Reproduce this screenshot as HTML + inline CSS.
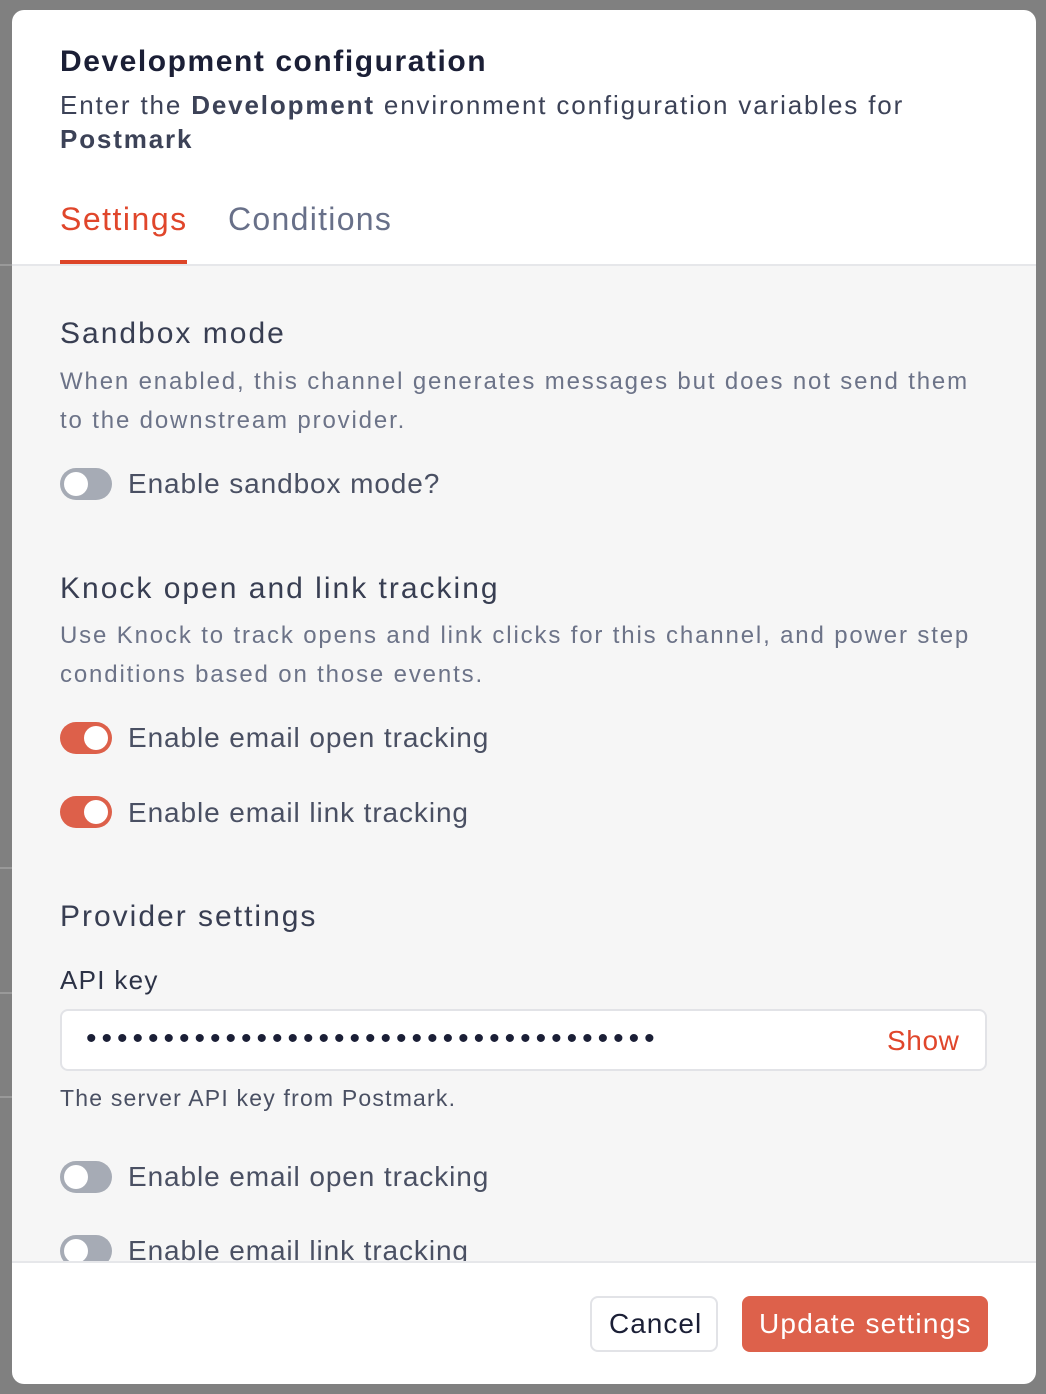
<!DOCTYPE html>
<html><head><meta charset="utf-8"><style>
*{margin:0;padding:0;box-sizing:border-box}
body{width:1046px;height:1394px;background:#808080;font-family:"Liberation Sans",sans-serif;position:relative;overflow:hidden}
.bgl{position:absolute;left:0;width:12px;height:2px;background:#999}
.modal{position:absolute;left:12px;top:10px;width:1024px;height:1374px;background:#fff;border-radius:12px;overflow:hidden}
.t{position:absolute;white-space:nowrap;line-height:1}
.body{position:absolute;left:0;top:254px;width:1024px;height:999px;background:#f6f6f6;border-top:2px solid #e6e7ea;border-bottom:2px solid #e6e7ea;overflow:hidden}
.tog{position:absolute;left:48px;width:52px;height:32px;border-radius:16px;background:#a6abb5}
.tog::after{content:"";position:absolute;top:4px;left:4px;width:24px;height:24px;border-radius:50%;background:#fff}
.tog.on{background:#dd604a}
.tog.on::after{left:24px}
.lbl{font-size:28px;color:#4a5063;letter-spacing:0.9px}
.h{font-size:30px;color:#383e52;letter-spacing:2px}
.d{font-size:24px;color:#6c7388;line-height:39px;white-space:normal;width:940px;letter-spacing:1.85px}
</style></head><body>
<div class="bgl" style="top:264px"></div>
<div class="bgl" style="top:867px"></div>
<div class="bgl" style="top:992px"></div>
<div class="bgl" style="top:1096px"></div>
<div class="modal">
  <div class="t" style="left:48px;top:37px;font-size:30px;font-weight:bold;color:#1b1f36;letter-spacing:1.55px">Development configuration</div>
  <div class="t" style="left:48px;top:78px;font-size:26px;color:#3c4257;line-height:34px;letter-spacing:1.85px">Enter the <b>Development</b> environment configuration variables for<br><b>Postmark</b></div>
  <div class="t" style="left:48px;top:193px;font-size:32px;color:#e0462b;letter-spacing:1.5px">Settings</div>
  <div style="position:absolute;left:48px;top:250px;width:127px;height:4px;background:#dd4528"></div>
  <div class="t" style="left:216px;top:193px;font-size:32px;color:#687089;letter-spacing:1.3px">Conditions</div>
  <div class="body">
    <div class="t h" style="left:48px;top:53px">Sandbox mode</div>
    <div class="t d" style="left:48px;top:96px">When enabled, this channel generates messages but does not send them to the downstream provider.</div>
    <div class="tog" style="top:202px"></div>
    <div class="t lbl" style="left:116px;top:204px">Enable sandbox mode?</div>
    <div class="t h" style="left:48px;top:308px">Knock open and link tracking</div>
    <div class="t d" style="left:48px;top:350px">Use Knock to track opens and link clicks for this channel, and power step conditions based on those events.</div>
    <div class="tog on" style="top:456px"></div>
    <div class="t lbl" style="left:116px;top:458px">Enable email open tracking</div>
    <div class="tog on" style="top:530px"></div>
    <div class="t lbl" style="left:116px;top:533px">Enable email link tracking</div>
    <div class="t h" style="left:48px;top:636px">Provider settings</div>
    <div class="t" style="left:48px;top:701px;font-size:26px;color:#2c3246;letter-spacing:1.3px">API key</div>
    <div style="position:absolute;left:48px;top:743px;width:927px;height:62px;background:#fff;border:2px solid #e2e3e7;border-radius:8px"></div>
    <div class="t" style="left:74px;top:758px;font-size:30px;color:#1b1f36;letter-spacing:5px">•••••••••••••••••••••••••••••••••••••</div>
    <div class="t" style="left:875px;top:761px;font-size:28px;color:#e0462b;letter-spacing:0.6px">Show</div>
    <div class="t" style="left:48px;top:821px;font-size:23px;color:#4a5063;letter-spacing:1.2px">The server API key from Postmark.</div>
    <div class="tog" style="top:895px"></div>
    <div class="t lbl" style="left:116px;top:897px">Enable email open tracking</div>
    <div class="tog" style="top:969px"></div>
    <div class="t lbl" style="left:116px;top:971px">Enable email link tracking</div>
  </div>
  <div style="position:absolute;left:578px;top:1286px;width:128px;height:56px;border:2px solid #e2e3e7;border-radius:8px;background:#fff"></div>
  <div class="t" style="left:597px;top:1300px;font-size:28px;color:#1b1f36;letter-spacing:1px">Cancel</div>
  <div style="position:absolute;left:730px;top:1286px;width:246px;height:56px;border-radius:8px;background:#dd614b"></div>
  <div class="t" style="left:747px;top:1300px;font-size:28px;color:#fff;letter-spacing:1.2px">Update settings</div>
</div>
</body></html>
